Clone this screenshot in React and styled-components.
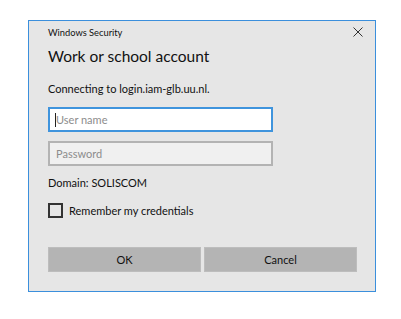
import React from "react"
import styled, { createGlobalStyle } from "styled-components"

const Global = createGlobalStyle`
  html, body {
    margin: 0;
    padding: 0;
    background: #ffffff;
    font-family: "Segoe UI", Lato, "Noto Sans", sans-serif;
    color: #000000;
  }
`

const Page = styled.div`
  width: 401px;
  height: 319px;
  padding: 20px 0 0 28px;
  box-sizing: border-box;
`

const Dialog = styled.div`
  width: 348px;
  height: 272px;
  box-sizing: border-box;
  border: 1px solid #3b8fdc;
  background: #e6e6e6;
  display: flex;
  flex-direction: column;
`

const TitleBar = styled.div`
  height: 24px;
  display: flex;
  align-items: center;
  justify-content: space-between;
  padding: 0 12px 0 19px;
  font-size: 9.3px;
  color: #111;
`

const Close = styled.div`
  width: 11px;
  height: 11px;
  display: flex;
  align-items: center;
  justify-content: center;
`

const Body = styled.div`
  padding: 0 18px 19px 19px;
  display: flex;
  flex-direction: column;
`

const Heading = styled.div`
  font-size: 15.5px;
  line-height: 24px;
  margin-top: 1px;
  color: #111;
`

const Text = styled.div`
  font-size: 11px;
  line-height: 16px;
  margin-top: ${p => p.$mt}px;
  color: #111;
`

const Field = styled.div`
  width: 225px;
  height: 25px;
  box-sizing: border-box;
  margin-top: ${p => p.$mt}px;
  border: 2px solid ${p => (p.$focus ? "#3f94dd" : "#b3b3b3")};
  background: ${p => (p.$focus ? "#ffffff" : "#f0f0f0")};
  display: flex;
  align-items: center;
  padding-left: 6px;
  font-size: 11px;
  color: #8c8c8c;
  position: relative;
`

const Caret = styled.span`
  position: absolute;
  left: 5px;
  top: 4px;
  width: 1px;
  height: 14px;
  background: #222;
`

const CheckRow = styled.label`
  display: flex;
  align-items: center;
  gap: 6px;
  margin-top: 12px;
  font-size: 11px;
  color: #111;
`

const Box = styled.span`
  width: 15px;
  height: 15px;
  box-sizing: border-box;
  border: 2px solid #333;
`

const Buttons = styled.div`
  display: grid;
  grid-template-columns: 1fr 1fr;
  gap: 3px;
  margin-top: 29px;
`

const Button = styled.div`
  height: 25px;
  box-sizing: border-box;
  background: #b4b4b4;
  border: 1px solid #bdbdbd;
  display: flex;
  align-items: center;
  justify-content: center;
  font-size: 11px;
  color: #111;
`

export default function App() {
  return (
    <Page>
      <Global />
      <Dialog>
        <TitleBar>
          <span>Windows Security</span>
          <Close>
            <svg width="10" height="10" viewBox="0 0 10 10">
              <path d="M0.5 0.5 L9.5 9.5 M9.5 0.5 L0.5 9.5" stroke="#333" strokeWidth="1" />
            </svg>
          </Close>
        </TitleBar>
        <Body>
          <Heading>Work or school account</Heading>
          <Text $mt={13}>Connecting to login.iam-glb.uu.nl.</Text>
          <Field $mt={10} $focus>
            <Caret />
            User name
          </Field>
          <Field $mt={9}>Password</Field>
          <Text $mt={9}>Domain: SOLISCOM</Text>
          <CheckRow>
            <Box />
            Remember my credentials
          </CheckRow>
          <Buttons>
            <Button>OK</Button>
            <Button>Cancel</Button>
          </Buttons>
        </Body>
      </Dialog>
    </Page>
  )
}
